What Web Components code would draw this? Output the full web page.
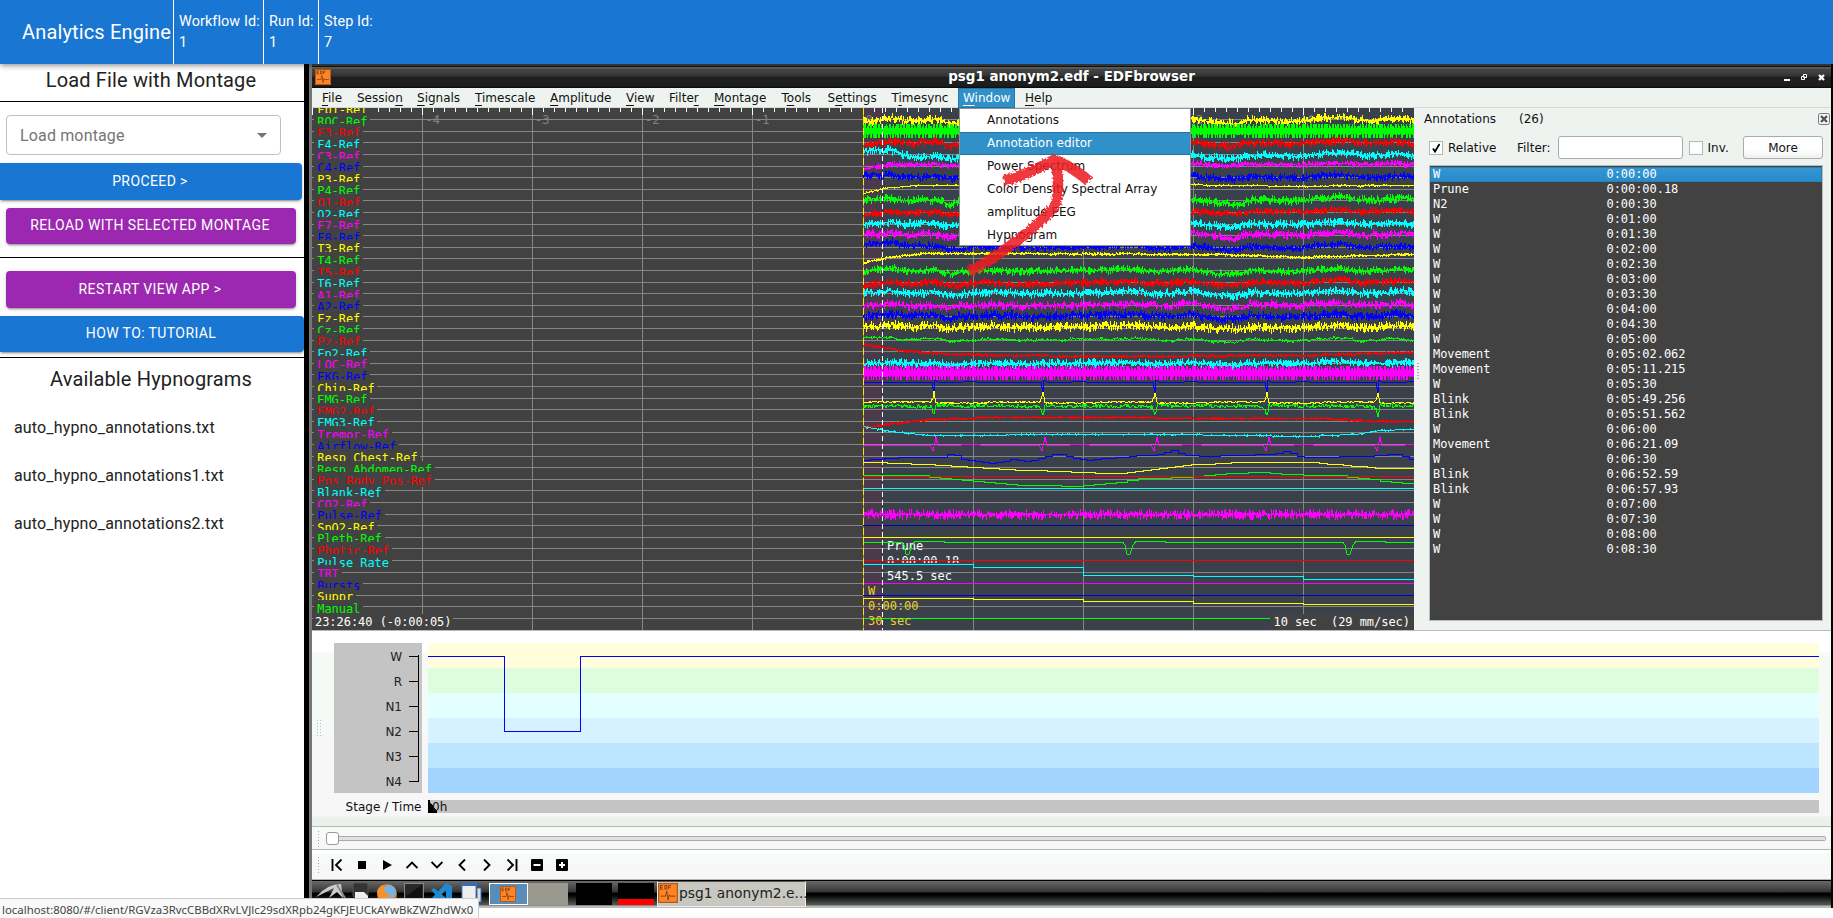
<!DOCTYPE html>
<html lang="en">
<head>
<meta charset="utf-8">
<title>Analytics Engine</title>
<style>
html,body{margin:0;height:100%;overflow:hidden;background:#fff}
</style>
</head>
<body>
<analytics-app></analytics-app>
<script>
const define = (name, html, init) => {
  const t = document.createElement('template');
  t.innerHTML = html;
  customElements.define(name, class extends HTMLElement {
    constructor(){ super(); this.attachShadow({mode:'open'}).appendChild(t.content.cloneNode(true)); }
    connectedCallback(){ if (init && !this.ready) { this.ready = true; init(this.shadowRoot, this); } }
  });
};

/* ---------- application header ---------- */
define('header-field', `<style>
:host{display:block;box-sizing:border-box;height:64px;border-left:1px solid #fff;padding:11px 4.5px 0 5px;font:14.4px/21px Roboto,sans-serif;letter-spacing:.1px;color:#fff;white-space:nowrap}
div{height:21px}</style><div><slot name="label"></slot></div><div><slot></slot></div>`);

define('app-header', `<style>
:host{display:flex;align-items:center;height:64px;box-sizing:border-box;padding-left:22px;background:#1976d2;color:#fff;position:relative;z-index:3;box-shadow:0 2px 4px -1px rgba(0,0,0,.3),0 4px 5px rgba(0,0,0,.14)}
h1{margin:0;width:151px;font:400 20px/64px Roboto,sans-serif;letter-spacing:.15px;white-space:nowrap}
.run{width:55px}.wf{width:90px;}
header-field{flex:none}
</style><h1>Analytics Engine</h1>
<header-field class="wf"><span slot="label">Workflow Id:</span>1</header-field>
<header-field class="run"><span slot="label">Run Id:</span>1</header-field>
<header-field><span slot="label">Step Id:</span>7</header-field>`);

/* ---------- sidebar ---------- */
define('action-button', `<style>
:host{display:flex;align-items:center;justify-content:center;box-sizing:border-box;border-radius:4px;background:var(--bg,#1976d2);color:#fff;font:400 14px/24px Roboto,sans-serif;letter-spacing:.4px;padding:0 2px 2px 0;box-shadow:0 3px 1px -2px rgba(0,0,0,.2),0 2px 2px rgba(0,0,0,.14),0 1px 5px rgba(0,0,0,.12);white-space:nowrap}
</style><slot></slot>`);

define('montage-select', `<style>
:host{display:flex;align-items:center;justify-content:space-between;box-sizing:border-box;width:275px;height:40px;border:1px solid #c0c0c0;border-radius:4px;padding:0 13px;font:16px Roboto,sans-serif;letter-spacing:.15px;color:#757575}
svg{display:block}</style><slot></slot><svg width="10" height="5"><path d="M0 0H10L5 5Z" fill="#757575"/></svg>`);

define('side-panel', `<style>
:host{display:block;width:304px;flex:none;background:#fff;color:#222;font-family:Roboto,sans-serif}
h2{margin:0;font:400 20px/32px Roboto,sans-serif;letter-spacing:.15px;text-align:center;padding-right:2px}
hr{margin:0;border:0;height:1px;background:#000}
.p{--bg:#9c27b0;margin-left:6px;width:290px}
.a{margin-top:8px;height:37px;width:302px;border-radius:0 4px 4px 0}
.f{font-size:16px;line-height:48px;letter-spacing:.15px;padding-left:14px;height:48px}
</style>
<h2 style="height:37px">Load File with Montage</h2><hr>
<montage-select style="margin:13px 0 0 6px">Load montage</montage-select>
<action-button class="a">PROCEED &gt;</action-button>
<action-button class="p" style="margin-top:8px;height:36px">RELOAD WITH SELECTED MONTAGE</action-button>
<hr style="margin:13px 0">
<action-button class="p" style="height:37px">RESTART VIEW APP &gt;</action-button>
<action-button class="a" style="height:36px;width:304px">HOW TO: TUTORIAL</action-button>
<hr style="margin-top:5px">
<h2 style="height:46px;line-height:43px">Available Hypnograms</h2>
<div class="f">auto_hypno_annotations.txt</div><div class="f">auto_hypno_annotations1.txt</div><div class="f">auto_hypno_annotations2.txt</div>`);

/* ---------- EDF browser window ---------- */
const edfIcon = s => `<svg width="${s}" height="${s}" viewBox="0 0 16 16"><rect width="16" height="16" fill="#ff8427"/><path d="M.5 .5h15v15H.5z" fill="none" stroke="#b35a18"/><path d="M2 10.500h4l1-4 1 7 1-4 .6 1H14M2 2v3M2 2h2M2 3.500h1.500M2 5h2M5.500 2v3h1.500V2zM8.500 5V2h2M8.500 3.500h1.500" stroke="#7a3a0c" stroke-width=".7" fill="none"/></svg>`;

define('title-bar', `<style>
:host{display:grid;grid-template-columns:1fr auto 1fr;align-items:center;height:24px;box-sizing:border-box;border-top:2px solid #484848;background:linear-gradient(#111 0,#111 1px,#6a6a6a 1px,#6a6a6a 2px,#494949 3px,#333 10px,#202020 11px,#1d1d1d 20px,#080808 22px);color:#fff;font:bold 13.45px/20px "DejaVu Sans",sans-serif;white-space:nowrap}
.i{padding-left:3px;height:16px}.i svg{display:block}
.b{justify-self:end;margin-right:5px}
</style><span class="i">${edfIcon(16)}</span><span class="t"><slot></slot></span>
<svg class="b" width="42" height="12" fill="none" stroke="#fff"><path d="M0 9h6" stroke-width="2"/><path d="M19.500 3.500h3v3h-3zM17.500 5.500h3v3h-3z" fill="#222"/><path d="M35 4l5 5M40 4l-5 5" stroke-width="2.300"/></svg>`);

define('menu-label', `<style>
:host{display:block;height:20px;line-height:20px;white-space:nowrap;box-sizing:border-box;position:relative}
:host([active]){color:#fff}
:host([active])::before{content:"";position:absolute;z-index:-1;inset:0 -5px;background:#3090c8;border:1px solid #2177a8}
</style><slot></slot>`);

define('menu-bar', `<style>
:host{display:flex;gap:0;height:20px;box-sizing:border-box;padding-left:10px;background:#eef3ef;border-bottom:1px solid #d5dad6;color:#111;font:12px "DejaVu Sans",sans-serif;position:relative;z-index:1}
u{text-underline-offset:3px}
</style>`, r => {
  const m = [['<u>F</u>ile',35],['Sessio<u>n</u>',60],['<u>S</u>ignals',58],['<u>T</u>imescale',75],['<u>A</u>mplitude',76],['<u>V</u>iew',43],['Filte<u>r</u>',45],['<u>M</u>ontage',67.500],['T<u>o</u>ols',46],['S<u>e</u>ttings',64],['T<u>i</u>mesync',71.500],['<u>W</u>indow',62],['<u>H</u>elp',60]];
  for (const [h,w] of m) {
    const d = document.createElement('div'); d.style.cssText = `width:${w}px;flex:none`;
    const e = document.createElement('menu-label'); e.innerHTML = h; e.style.width = 'max-content';
    if (h.includes('indow')) e.setAttribute('active','');
    d.append(e); r.append(d);
  }
});

define('window-menu', `<style>
:host{display:block;position:absolute;left:647px;top:44px;width:232px;height:138px;box-sizing:border-box;border:1px solid #929292;background:#fff;color:#111;font:12px/22px "DejaVu Sans",sans-serif;z-index:4}
div{height:23px;padding-left:27px;box-sizing:border-box;white-space:nowrap;line-height:22px}
.s{background:#3090c8;color:#fff;box-shadow:inset 0 1px #2374a4,inset 0 -1px #2374a4}
</style><div>Annotations</div><div class="s">Annotation editor</div><div>Power Spectrum</div><div>Color Density Spectral Array</div><div>amplitude EEG</div><div>Hypnogram</div>`);

define('red-arrow', `<style>:host{display:block;position:absolute;left:646px;top:84px;z-index:5}</style>
<svg width="150" height="140" viewBox="960 148 150 140" fill="none" stroke="#ed1c24" stroke-linejoin="round" style="display:block">
<defs><filter id="r" x="-10%" y="-10%" width="120%" height="120%"><feTurbulence type="fractalNoise" baseFrequency=".5" numOctaves="2" seed="3"/><feDisplacementMap in="SourceGraphic" scale="4.500"/><feGaussianBlur stdDeviation=".5"/></filter></defs>
<g opacity=".87" filter="url(#r)"><path d="M971 272C1004 254 1042 226 1058 204Q1062 186 1058 163" stroke-width="10.500"/><path d="M1006 181C1026 176 1043 167 1056 160Q1070 164 1091 181" stroke-width="11"/></g></svg>`);

define('edf-plot', `<style>:host{display:block;width:1102px;height:522px;background:#424242;flex:none}svg{display:block}
text{font:12px "DejaVu Sans Mono",monospace;white-space:pre}</style>`, r => {
  let seed = 7; const rnd = () => (seed = (seed*16807)%2147483647)/2147483647;
  const lerp = (p,x) => { if (x<=p[0][0]) return p[0][1]; for (let i=1;i<p.length;i++) if (x<=p[i][0]) {const [a,b]=p[i-1],[c,d]=p[i];return b+(d-b)*(x-a)/(c-a);} return p[p.length-1][1]; };
  const o = [];
  const line = (x1,y1,x2,y2,c,e='') => o.push(`<path d="M${x1} ${y1}L${x2} ${y2}" stroke="${c}" ${e}/>`);
  const box = (x,y,w,h,f) => o.push(`<rect x="${x}" y="${y}" width="${w}" height="${h}" fill="${f}"/>`);
  const txt = (x,y,s,f,e='') => o.push(`<text x="${x}" y="${y}" fill="${f}" ${e}>${s}</text>`);
  box(863,108,551,522,'#3a414a'); box(864,108,18,522,'#4a3a4a');
  const G='#868686', Y='#ff0',N='#0f0',R='#f00',C='#0ff',M='#f0f',B='#00f';
  const gy = k => Math.floor(108+k*11.6)+.5;
  for (let k=1;k<=44;k++) line(312,gy(k),1414,gy(k),G);
  for (let i=0;i<9;i++) line(422.5+i*110+(i>3?1:0),108,422.5+i*110+(i>3?1:0),630,G);
  for (let i=0;i<=100;i++) { const x=Math.floor(312+i*11.02)+.5; line(x,108,x,i%10==0?115:112,'#fff'); }
  [[-4,425.5],[-3,535],[-2,645],[-1,755],[0,865.5],[3,1196],[4,1306]].forEach(([s,x])=>txt(x,124,s,'#828282'));
  const names = 'Fp1-Ref,ROC-Ref,F3-Ref,F4-Ref,C3-Ref,C4-Ref,P3-Ref,P4-Ref,O1-Ref,O2-Ref,F7-Ref,F8-Ref,T3-Ref,T4-Ref,T5-Ref,T6-Ref,A1-Ref,A2-Ref,Fz-Ref,Cz-Ref,Pz-Ref,Fp2-Ref,LOC-Ref,EKG-Ref,Chin-Ref,EMG-Ref,EMG2-Ref,EMG3-Ref,Tremor-Ref,Airflow-Ref,Resp Chest-Ref,Resp Abdomen-Ref,Pos Body Pos-Ref,Blank-Ref,CO2-Ref,Pulse-Ref,SpO2-Ref,Pleth-Ref,Photic-Ref,Pulse Rate,TRT,Bursts,Suppr,Manual'.split(',');
  const cols=[Y,N,R,C,M,B];
  names.forEach((n,k)=>{ const y=Math.round(108.2+k*11.6); box(314,y-7,n.length*7.17+6,15,'#424242'); txt(317.3,y+6,n,cols[k%6],`textLength="${n.length*7.17}"`); });
  for (let i=0;i<=10;i++) { const x=Math.floor(312+i*11.02)+.5; if(i==0||i>5) line(x,108,x,i%10==0?115:112,'#fff'); }

  const drift=[[863,1],[882,-1],[890,-3],[905,1],[935,-1],[950,4],[965,1],[990,-1],[1020,1],[1060,0],[1100,-1],[1135,-3],[1150,0],[1170,1],[1190,-3],[1215,3],[1235,4],[1250,-1],[1280,0],[1300,1],[1315,-2],[1340,-4],[1360,0],[1385,-1],[1400,-3],[1414,0]];
  const noisy=(c,pts,amp,dr=1)=>{ let d='',w=0; for(let x=863;x<1414;x++){ w=w*.72+(rnd()-.5)*1.6; const m=lerp(pts,x)+lerp(drift,x)*dr*.75+w*Math.min(dr,1);
    const up=Math.round(amp*1.6*Math.pow(rnd(),1.5)), dn=Math.round(amp*1.6*Math.pow(rnd(),1.5)); const y=Math.round(m);
    d+=`M${x+.5} ${y-up}V${y+dn+1}`;} o.push(`<path d="${d}" stroke="${c}"/>`); };
  const band=(c,a,b)=>{ box(863,a+4,551,b-a-8,c); let d=''; for(let x=863;x<1414;x++){ const gap=x%11==0||x%11==3; if(gap) continue; d+=`M${x+.5} ${a+(rnd()<.3?2:0)}V${b-(rnd()<.3?3:0)}`;} o.push(`<path d="${d}" stroke="${c}"/>`); let e=''; for(let x=866;x<1414;x+=11) e+=`M${x+.5} ${a}V${a+4}M${x+.5} ${b-4}V${b}`; o.push(`<path d="${e}" stroke="#3a414a"/>`); };
  noisy(Y,[[863,120],[1414,120]],2.6,1.2);
  band(N,124,138);
  noisy(R,[[863,144],[900,142],[1414,143]],2.6);
  noisy(C,[[863,149],[890,151],[915,157],[940,156],[1414,155]],2.5);
  noisy(M,[[863,168],[895,164],[1414,164]],1.8,.4);
  noisy(B,[[863,174],[900,176],[1414,177]],2.4,.8);
  noisy(Y,[[863,193],[885,188],[915,185],[1220,184.500],[1290,186],[1414,185]],.4,.1);
  noisy(N,[[863,198],[900,200],[1414,200]],2.8);
  noisy(R,[[863,215],[890,212],[1414,211]],2.2,.6);
  noisy(C,[[863,223],[1414,224]],2.7,.8);
  noisy(M,[[863,234],[1414,234.500]],2.7);
  noisy(B,[[863,243],[950,247],[1414,247]],2.3);
  noisy(Y,[[863,262],[895,256],[925,253],[1220,254],[1300,257],[1414,254]],.8,.1);
  noisy(N,[[863,270],[1414,271]],2.3,1);
  noisy(R,[[863,285],[890,283],[1414,282]],2.4,.8);
  noisy(C,[[863,292],[1414,293]],2.6,.9);
  noisy(M,[[863,305],[1414,305]],2.6,1);
  noisy(B,[[863,315],[1414,316]],2.9,.9);
  noisy(Y,[[863,326],[1414,327]],2.9,.7);
  noisy(N,[[863,336],[900,339],[1414,340]],.5,.7);
  noisy(R,[[863,344],[900,350],[950,354],[1080,356],[1310,355],[1414,351.500]],.8,.05);
  noisy(C,[[863,363],[1414,363]],2.8,.6);
  band(M,366,380);
  const beats=[934,1043,1155,1267,1378];
  const path=(c,f,amp=0)=>{let d='';for(let x=863;x<=1414;x++)d+=(d?'L':'M')+x+' '+(f(x)+(rnd()-.5)*amp).toFixed(1);o.push(`<path d="${d}" stroke="${c}"/>`);};
  const nb=x=>{let m=99;for(const b of beats)if(Math.abs(x-b)<Math.abs(m))m=x-b;return m;};
  const pulse=(p)=>x=>lerp(p,nb(x));
  path(B,x=>382.5+pulse([[-5,0],[-2,0],[0,10],[1,-2],[5,0],[20,0],[38,-1],[48,0]])(x));
  path(Y,x=>402+pulse([[-3,0],[-1,-5],[0,-10],[2,1],[10,1]])(x),1.8);
  path(N,x=>406+pulse([[-30,0],[-3,1],[0,9],[2,-1],[20,0]])(x),3.8);
  noisy(R,[[863,427],[895,423],[930,419],[990,417],[1320,418],[1370,421],[1414,421.500]],.7,.05);
  noisy(C,[[863,426],[890,431],[930,435],[1080,434],[1200,434.500],[1310,436],[1355,434],[1380,430],[1414,429]],.4,.05);
  path(M,x=>445.5+pulse([[-4,0],[-1,5],[2,-8],[4,0],[20,0],[40,-1.500],[50,0]])(x));
  const stepline=(c,p,q=8)=>{let d='M863 '+(Math.round(p[0][1])+.5);for(let x=863;x<1414;x+=q)d+=`V${Math.round(lerp(p,x))+.5}H${x+q}`;o.push(`<path d="${d}" stroke="${c}"/>`);};
  stepline(B,[[863,460],[900,457],[940,456.500],[950,453],[960,459],[993,463],[1010,459],[1025,461],[1055,453.500],[1083,460],[1140,455],[1160,454],[1170,449],[1180,454],[1200,456],[1270,454],[1283,451],[1300,457],[1370,456],[1393,453],[1414,461]],7);
  stepline(Y,[[863,462],[885,462.500],[940,465],[1000,469],[1060,471],[1090,472.500],[1120,473],[1190,464.500],[1235,462],[1310,462],[1370,467.500],[1414,468.500]]);
  stepline(N,[[863,474.500],[915,475],[970,481],[1015,484.500],[1070,486],[1100,484],[1140,478],[1180,477],[1220,473],[1260,472],[1300,475],[1330,474.500],[1350,477],[1400,483],[1414,483]],11);
  line(863,476.5,1414,476.5,R); line(863,488.5,1414,488.5,C);
  noisy(M,[[863,513.500],[1414,513.500]],3.2,0);
  line(863,525.5,1414,525.5,'#0000b8'); line(863,537.5,1414,537.5,Y);
  txt(887,550,'Prune','#fff'); txt(887,565,'0:00:00.18','#fff'); box(886,563,84,3,'#3a414a'); txt(887,580,'545.5 sec','#fff');
  let d='M863 542.5'; for(const x of [908,1129,1349]) d+=`H${x-6}L${x-4} 545L${x-2} 554H${x+1}L${x+4} 545L${x+7} 541.5H${x+36}V542.5`; o.push(`<path d="${d}H1414" stroke="${N}"/>`);
  line(863,560.5,1414,560.5,R);
  const st=(c,ys)=>{let d='M863 '+ys[0]+'H973.5';ys.slice(1).forEach((y,i)=>d+=`V${y}H${i==3?1414:1083.5+i*110}`);o.push(`<path d="${d}" stroke="${c}"/>`);};
  st(C,[564.5,567.5,575.5,576.5,579.5]);
  line(863,583.5,1414,583.5,M); line(863,595.5,1414,595.5,'#0000c8');
  st(Y,[598.5,599.5,601.5,603.5,604.5]);
  line(863,618.5,1414,618.5,N);
  txt(868,595,'W','#e8d523'); txt(868,610,'0:00:00','#e8d523'); txt(868,625,'30 sec','#e8d523');
  line(863.5,108,863.5,630,'#ffe600','stroke-dasharray="7 3"');
  line(882.5,108,882.5,630,'#fff','stroke-dasharray="5 3"');
  box(1270,614,144,16,'#424242'); box(313,614,140,16,'#424242');
  txt(315,625.5,'23:26:40 (-0:00:05)','#fff',`textLength="136.500"`); txt(1273.5,625.5,'10 sec  (29 mm/sec)','#fff',`textLength="136.500"`);
  r.innerHTML += `<svg width="1102" height="522" viewBox="312 108 1102 522" fill="none" shape-rendering="crispEdges">${o.join('')}</svg>`;
});

define('check-box', `<style>:host{display:block;width:12px;height:12px;border:1px solid #b4b8b5;background:#fff}svg{display:none}:host([checked]) svg{display:block}</style><svg width="12" height="12"><path d="M3 6.500L5 9.500L9.500 2" fill="none" stroke="#000" stroke-width="1.800"/></svg>`);

define('annotation-row', `<style>:host{display:grid;grid-template-columns:173.500px 1fr;height:15px;padding-left:3px;box-sizing:border-box;font:12px/15px "DejaVu Sans Mono",monospace;letter-spacing:-.05px;color:#fff}
:host([selected]){background:linear-gradient(#3498d4,#278acb);box-shadow:inset 0 0 0 1px #2b7fb3}</style><slot name="name"></slot><slot></slot>`);

define('annotation-panel', `<style>
:host{display:flex;flex-direction:column;flex:1;height:522px;box-sizing:border-box;background:#eef3ef;color:#111;font:12px "DejaVu Sans",sans-serif;position:relative}
.h{display:flex;height:21px;align-items:center;padding:0 1px 0 10px}.h svg{margin-left:auto}
.h b{font-weight:400;width:95px}
.f{display:flex;align-items:center;height:23px;margin:7px 8px 0 15px}
.in{box-sizing:border-box;width:125px;height:23px;background:#fff;border:1px solid #a9adaa;border-radius:3px;margin-left:7px;margin-right:6px}
.m{box-sizing:border-box;width:80px;height:23px;margin-left:auto;border:1px solid #a9adaa;border-radius:3px;background:linear-gradient(#fff 60%,#f0f0f0);text-align:center;line-height:22px}
.l{margin:6px 8px 0 15px;height:456px;box-sizing:border-box;border:1px solid #b9bcb9;background:#424242;padding-top:1px}
.g{position:absolute;left:3px;top:254px;width:2px;height:17px;background:radial-gradient(#aaa 40%,transparent 50%) 0 0/2px 3px}
</style><div class="h"><b>Annotations</b><span>(26)</span><svg width="12" height="12"><rect x=".5" y=".5" width="11" height="11" rx="2" fill="#f5f5f5" stroke="#777"/><path d="M3 3l6 6M9 3l-6 6" stroke="#555" stroke-width="2.400"/></svg></div>
<div class="f"><check-box checked></check-box><span style="margin-left:5px;width:69px">Relative</span><span>Filter:</span><div class="in"></div><check-box></check-box><span style="margin-left:5px">Inv.</span><div class="m">More</div></div><div class="l"></div><i class="g"></i>`, r => {
  const rows='W 0:00:00,Prune 0:00:00.18,N2 0:00:30,W 0:01:00,W 0:01:30,W 0:02:00,W 0:02:30,W 0:03:00,W 0:03:30,W 0:04:00,W 0:04:30,W 0:05:00,Movement 0:05:02.062,Movement 0:05:11.215,W 0:05:30,Blink 0:05:49.256,Blink 0:05:51.562,W 0:06:00,Movement 0:06:21.09,W 0:06:30,Blink 0:06:52.59,Blink 0:06:57.93,W 0:07:00,W 0:07:30,W 0:08:00,W 0:08:30'.split(',');
  r.querySelector('.l').innerHTML = rows.map((t,i)=>{const [a,b]=t.split(' ');return `<annotation-row${i?'':' selected'}><span slot="name">${a}</span><span>${b}</span></annotation-row>`}).join('');
});

define('hypno-gram', `<style>
:host{display:block;height:196px;box-sizing:border-box;border-top:1px solid #b8b8b8;background:linear-gradient(#fff 21px,#f6faf7 22px,#f6faf7 103px,#f7f7f7 104px,#f7f7f7 185px,#edf1ed 186px)}
svg{display:block}text{font:12px "DejaVu Sans",sans-serif}</style>
<svg width="1519" height="195" viewBox="312 631 1519 195" shape-rendering="crispEdges"></svg>`, r => {
  const s = ['W','R','N1','N2','N3','N4'], c=['#fffddc','#defddc','#e4ffff','#d6f1ff','#bce6ff','#a3d4ff'];
  let h='<rect x="334" y="643" width="88" height="150" fill="#c4c4c4"/>';
  s.forEach((t,i)=>{h+=`<rect x="428" y="${643+i*25}" width="1391" height="25" fill="${c[i]}"/><text x="402" y="${661+i*25}" text-anchor="end" fill="#222">${t}</text><path d="M409 ${656.5+i*25}h10" stroke="#000"/>`});
  h+='<path d="M418.500 655V782" stroke="#000"/><path d="M428 656.500H504.500V731.500H580.500V656.500H1819" stroke="#00f" fill="none"/><rect x="428" y="800" width="1391" height="13" fill="#c4c4c4"/><path d="M428 800V813H437V811L430 802V800Z"/><text x="345.500" y="811" fill="#111" textLength="76">Stage / Time</text><text x="432" y="811" fill="#111">0h</text>';
  h+='<path d="M317.500 720V737M320.500 720V737" stroke="#bbb" stroke-dasharray="1 2"/>';
  r.querySelector('svg').innerHTML=h;
});

define('time-slider', `<style>:host{display:flex;align-items:center;height:23px;box-sizing:border-box;border-top:1px solid #b3b9b5;background:linear-gradient(#f7fbf8 50%,#f7f7f7 55%)}
i{width:4px;height:17px;margin:0 5px 0 5px;background:radial-gradient(circle,#aaa 35%,transparent 45%) 0 0/3px 3px}
b{box-sizing:border-box;width:13px;height:13px;border:1px solid #999;border-radius:3px;background:#fff}
u{box-sizing:border-box;flex:1;height:5px;margin-right:5px;border:1px solid #aaa;border-left:0;border-radius:0 2px 2px 0;background:#e2e2e2}</style><i></i><b></b><u></u>`);

define('play-toolbar', `<style>:host{display:flex;align-items:center;height:31px;box-sizing:border-box;border-top:1px solid #b3b9b5;border-bottom:1px solid #b3b9b5;background:linear-gradient(#fff 3px,#f7fbf8 4px,#f7fbf8 50%,#f7f7f7 53%)}
i{width:4px;height:17px;margin:0 3px 0 5px;background:radial-gradient(circle,#aaa 35%,transparent 45%) 0 0/3px 3px}
svg{display:block;margin:0 6.500px}</style><i></i>`, r => {
  const p='fill="none" stroke="#000" stroke-width="1.900"';
  const a=[`<path d="M1.500 0V12M10.500 .5L5 6L10.500 11.500" ${p}/>`,'<path d="M2 2h8v8H2z"/>','<path d="M2 1V11L11 6Z"/>',`<path d="M.5 9L6 3.500L11.500 9" ${p}/>`,`<path d="M.5 3L6 8.500L11.500 3" ${p}/>`,`<path d="M9 .5L3.500 6L9 11.500" ${p}/>`,`<path d="M3 .5L8.500 6L3 11.500" ${p}/>`,`<path d="M1.500 .5L7 6L1.500 11.500M10.500 0V12" ${p}/>`,'<rect width="12" height="12" rx="1"/><path d="M2.500 6h7" stroke="#fff" stroke-width="2"/>','<rect width="12" height="12" rx="1"/><path d="M3 6h6M6 3v6" stroke="#fff" stroke-width="2"/>'];
  r.innerHTML += a.map(x=>`<svg width="12" height="12">${x}</svg>`).join('');
});

define('task-bar', `<style>:host{display:flex;height:28px;box-sizing:border-box;border-top:1px solid #000;background:linear-gradient(#6a6a6a 0,#333 11px,#000 12px,#000 14px,#555d57 24px,#bbb 25px,#bbb 27px)}
.ic{width:175px;height:26px;flex:none}svg{display:block}
.bl{box-sizing:border-box;margin:2px 0 0 2px;width:39px;height:22px;background:#5a8cb9;border:1px solid #fff;padding:2px 0 0 10px}
.gr{margin-top:2px;width:40px;height:22px;background:#99998f}
.k{margin:2px 0 0 8px;width:36px;height:22px;background:#000}.r{margin-left:6px;background:linear-gradient(#000 16px,red 16px)}
.t{display:flex;box-sizing:border-box;margin:0 0 0 3px;width:149px;height:26px;background:#c8c7c0;border:1px solid #eee;border-top-color:#555;color:#222;font:13.800px/23px "DejaVu Sans",sans-serif;white-space:nowrap}
.t svg{margin:1px 1px 0 0;flex:none}
</style><div class="ic"><svg width="175" height="26" viewBox="312 881 175 26">
<path d="M316 897Q327 884 341 884L343 898L337 892L329 898L334 888Z" fill="#ccc"/><path d="M337 885L345 898" stroke="#888" stroke-width="2"/>
<rect x="353" y="883" width="15" height="14" rx="2" fill="#333" stroke="#555"/><path d="M355 892H364L368 896V900H355Z" fill="#eee"/>
<circle cx="387" cy="894" r="10" fill="#ee7d1b"/><circle cx="389" cy="892" r="7" fill="#7ab4dc"/><path d="M377 891Q381 883 385 886Q382 891 387 893Q391 895 388 899H379Z" fill="#f5912b"/>
<rect x="404.500" y="883.500" width="19" height="18" fill="#252a28" stroke="#888"/><path d="M406 896L422 885V902H406Z" fill="#111"/>
<path d="M431 890L434 888L451 902H443ZM446 883L452 886V904L446 902V890L434 902H430L431 899Z" fill="#1f8ad2"/>
<rect x="462" y="884" width="14" height="16" fill="#eee" stroke="#557bb5"/><path d="M461 884.500h16" stroke="#356cc0" stroke-width="3"/><path d="M477 888h4v14h-4z" fill="#ddd" stroke="#356cc0"/></svg></div>
<div class="bl">${edfIcon(16)}</div><div class="gr"></div><div class="k"></div><div class="k r"></div><div class="t">${edfIcon(20)}<span>psg1 anonym2.e...</span></div>`);

define('edf-window', `<style>:host{display:block;width:1529px;box-sizing:border-box;border-left:5px solid #000;flex:none;background:#000;height:844px}
.o{border-left:3px solid #777;padding-right:2px;position:relative;z-index:0;box-shadow:inset 1px 0 #000;padding-left:0}
.m{display:flex}</style>
<div class="o"><title-bar>psg1 anonym2.edf - EDFbrowser</title-bar><menu-bar></menu-bar><div class="m"><edf-plot></edf-plot><annotation-panel></annotation-panel></div><hypno-gram></hypno-gram><time-slider></time-slider><play-toolbar></play-toolbar><task-bar></task-bar>
<window-menu></window-menu><red-arrow></red-arrow></div>`);

define('link-status', `<style>:host{display:block;position:fixed;left:0;bottom:0;z-index:9;width:479px;height:20px;box-sizing:border-box;border-top:1px solid #ccc;border-right:1px solid #ccc;background:#f9f9f9;color:#444;font:11.400px/22px "Noto Sans","Open Sans",sans-serif;padding-left:2px;white-space:nowrap}</style><slot></slot>`);

define('analytics-app', `<style>:host{display:block;width:1833px;height:918px;overflow:hidden;background:#fff}.b{display:flex;align-items:flex-start}</style>
<app-header></app-header><div class="b"><side-panel></side-panel><edf-window></edf-window></div>
<link-status>localhost:8080/#/client/RGVza3RvcCBBdXRvLVJlc29sdXRpb24gKFJEUCkAYwBkZWZhdWx0</link-status>`);
</script>
</body>
</html>
